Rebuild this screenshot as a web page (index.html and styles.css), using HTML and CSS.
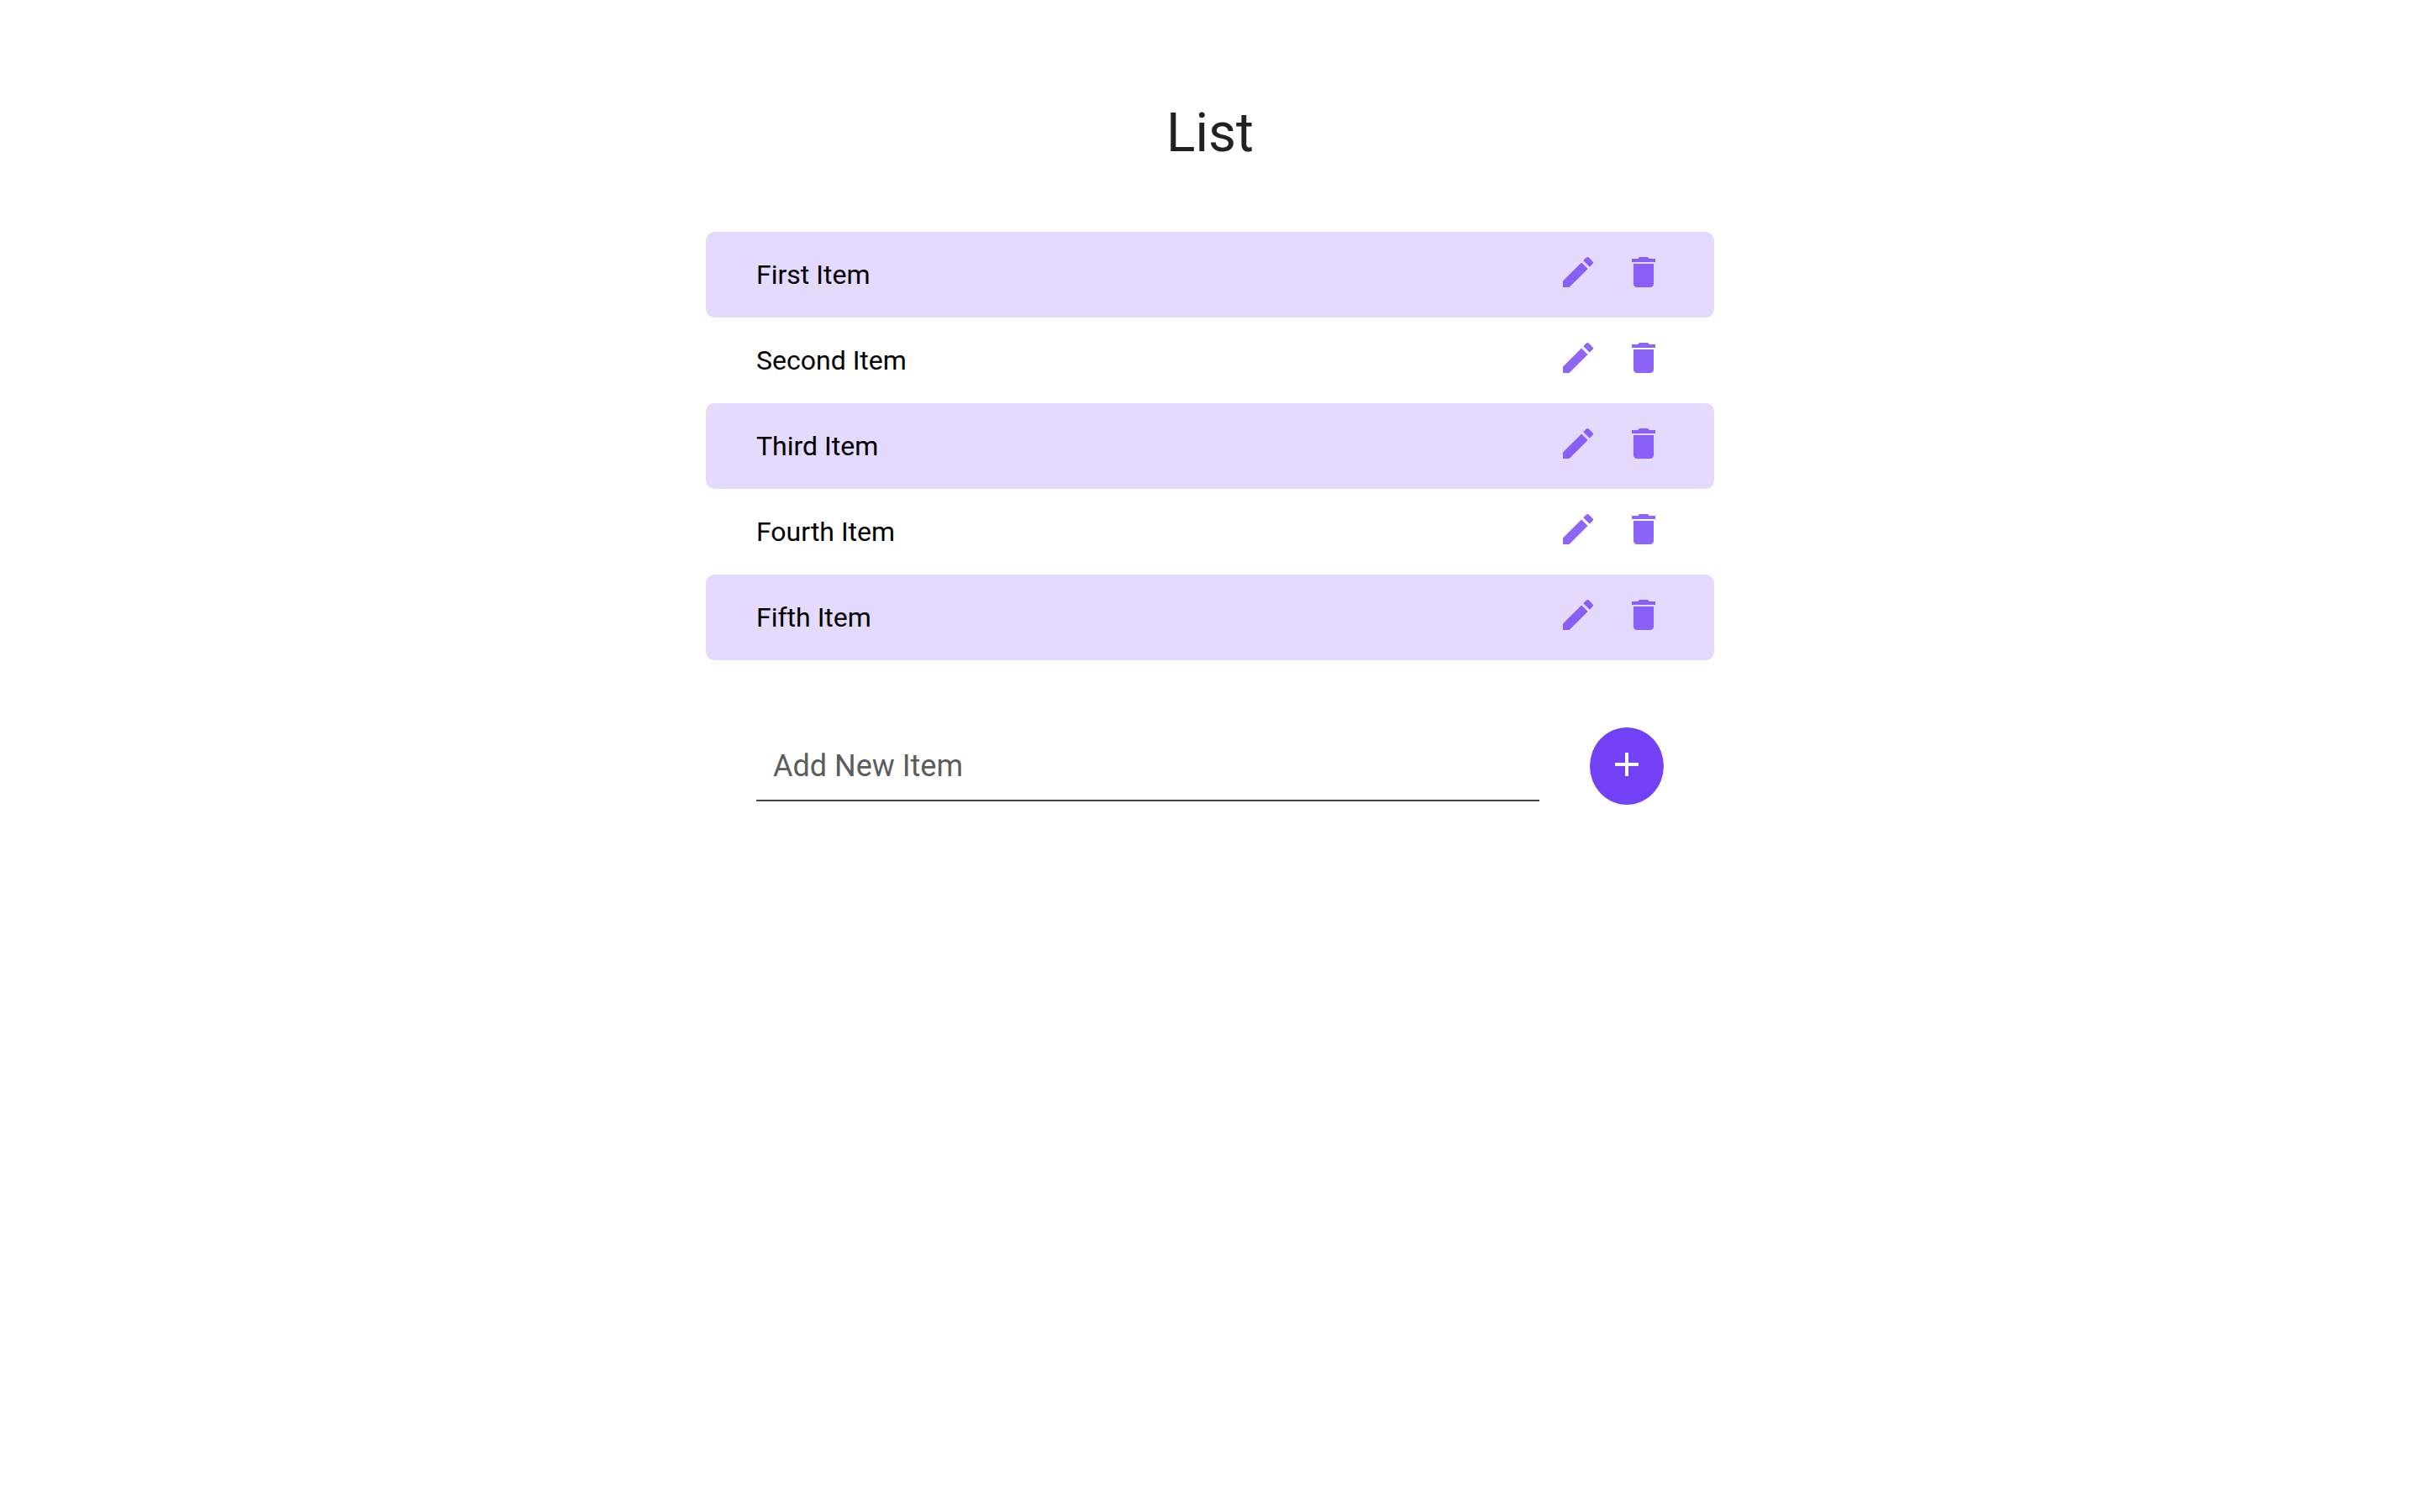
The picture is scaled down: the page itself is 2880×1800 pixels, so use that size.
FILE: index.html
```html
<!DOCTYPE html>
<html lang="en">
<head>
<meta charset="utf-8">
<title>List</title>
<meta name="viewport" content="width=device-width, initial-scale=1">
<link rel="stylesheet" href="styles.css">
</head>
<body>
<svg class="sprite" aria-hidden="true">
  <symbol id="edit" viewBox="0 0 24 24"><path d="M3 17.25V21h3.75L17.81 9.94l-3.75-3.75L3 17.25zM20.71 7.04c.39-.39.39-1.02 0-1.41l-2.34-2.34c-.39-.39-1.02-.39-1.41 0l-1.83 1.83 3.75 3.75 1.83-1.83z"/></symbol>
  <symbol id="delete" viewBox="0 0 24 24"><path d="M6 19c0 1.100.900 2 2 2h8c1.100 0 2-.900 2-2V7H6v12zM19 4h-3.500l-1-1h-5l-1 1H5v2h14V4z"/></symbol>
  <symbol id="add" viewBox="0 0 24 24"><path d="M19 13h-6v6h-2v-6H5v-2h6V5h2v6h6v2z"/></symbol>
</svg>
<main class="page">
  <h1 class="title">List</h1>
  <ul class="list">
    <li class="item"><span class="item-text">First Item</span><button class="icon-button" type="button" aria-label="Edit First Item"><svg class="icon"><use href="#edit"/></svg></button><button class="icon-button" type="button" aria-label="Delete First Item"><svg class="icon"><use href="#delete"/></svg></button></li>
    <li class="item"><span class="item-text">Second Item</span><button class="icon-button" type="button" aria-label="Edit Second Item"><svg class="icon"><use href="#edit"/></svg></button><button class="icon-button" type="button" aria-label="Delete Second Item"><svg class="icon"><use href="#delete"/></svg></button></li>
    <li class="item"><span class="item-text">Third Item</span><button class="icon-button" type="button" aria-label="Edit Third Item"><svg class="icon"><use href="#edit"/></svg></button><button class="icon-button" type="button" aria-label="Delete Third Item"><svg class="icon"><use href="#delete"/></svg></button></li>
    <li class="item"><span class="item-text">Fourth Item</span><button class="icon-button" type="button" aria-label="Edit Fourth Item"><svg class="icon"><use href="#edit"/></svg></button><button class="icon-button" type="button" aria-label="Delete Fourth Item"><svg class="icon"><use href="#delete"/></svg></button></li>
    <li class="item"><span class="item-text">Fifth Item</span><button class="icon-button" type="button" aria-label="Edit Fifth Item"><svg class="icon"><use href="#edit"/></svg></button><button class="icon-button" type="button" aria-label="Delete Fifth Item"><svg class="icon"><use href="#delete"/></svg></button></li>
  </ul>
  <form class="add-form">
    <input class="add-input" type="text" placeholder="Add New Item" aria-label="Add New Item">
    <button class="add-button" type="button" aria-label="Add item"><svg class="icon"><use href="#add"/></svg></button>
  </form>
</main>
</body>
</html>
```
FILE: styles.css
```css
* { box-sizing: border-box; }

body {
  margin: 0;
  background: #fff;
  color: #000;
  font-family: Roboto, sans-serif;
}

.sprite { display: none; }

.page {
  width: 100%;
  max-width: 1200px;
  margin: 0 auto;
  padding-top: 117px;
}

.title {
  margin: 0 0 75px;
  color: #212121;
  font-size: 64px;
  font-weight: 400;
  line-height: 84px;
  text-align: center;
}

.list {
  margin: 0;
  padding: 0;
  list-style: none;
}

.item {
  display: flex;
  align-items: center;
  gap: 30px;
  min-height: 102px;
  padding: 0 60px;
  border-radius: 10px;
}

.item:nth-child(odd) { background: #e3dafd; }

.item-text {
  flex: 1;
  font-size: 32px;
  line-height: 40px;
}

.icon-button {
  padding: 12px 0 18px;
  border: 0;
  background: none;
  color: #7341f6;
  opacity: 0.8;
}

.icon {
  display: block;
  width: 48px;
  height: 48px;
  fill: currentColor;
}

.add-form {
  display: flex;
  align-items: center;
  gap: 60px;
  padding: 80px 60px;
}

.add-input {
  flex: 1;
  min-width: 0;
  height: 84px;
  padding: 2px 20px 0;
  border: 0;
  border-bottom: 2px solid #434343;
  background: none;
  font: 36px Roboto, sans-serif;
}

.add-input::placeholder { color: #5c5c5c; opacity: 1; }

.add-button {
  display: grid;
  place-items: center;
  width: 88px;
  height: 92px;
  padding: 0 0 4px;
  border: 0;
  border-radius: 50%;
  background: #7341f6;
  color: #fff;
}
```
